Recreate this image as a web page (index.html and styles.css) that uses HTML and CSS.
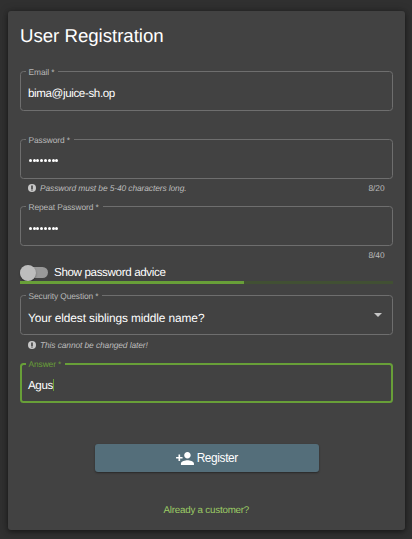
FILE: index.html
```html
<!DOCTYPE html>
<html lang="en">
<head>
<meta charset="utf-8">
<title>User Registration</title>
<link rel="stylesheet" href="styles.css">
</head>
<body>
<main class="card">
  <h1 class="title">User Registration</h1>
  <form class="form">
    <div class="field field-email">
      <label class="label">Email *</label>
      <span class="value">bima@juice-sh.op</span>
    </div>
    <div class="hint-row"></div>
    <div class="field">
      <label class="label">Password *</label>
      <span class="dots"><i></i><i></i><i></i><i></i><i></i><i></i><i></i><i></i></span>
    </div>
    <div class="hint-row">
      <svg class="info" viewBox="0 0 16 16"><circle cx="8" cy="8" r="8"/><path d="M6.4 3h3.2v7H6.4zM6.4 11h3.2v2H6.4z"/></svg>
      <em class="hint">Password must be 5-40 characters long.</em>
      <span class="count">8/20</span>
    </div>
    <div class="field">
      <label class="label">Repeat Password *</label>
      <span class="dots"><i></i><i></i><i></i><i></i><i></i><i></i><i></i><i></i></span>
    </div>
    <div class="hint-row hint-short"><span class="count">8/40</span></div>
    <div class="toggle-row">
      <span class="switch"><span class="thumb"></span></span>
      <span class="toggle-text">Show password advice</span>
    </div>
    <div class="progress"><div class="bar"></div></div>
    <div class="field">
      <label class="label">Security Question *</label>
      <span class="value value-select">Your eldest siblings middle name?</span>
      <svg class="arrow" viewBox="0 0 8 4"><path d="M0 0h8L4 4z"/></svg>
    </div>
    <div class="hint-row hint-row-later">
      <svg class="info" viewBox="0 0 16 16"><circle cx="8" cy="8" r="8"/><path d="M6.4 3h3.2v7H6.4zM6.4 11h3.2v2H6.4z"/></svg>
      <em class="hint">This cannot be changed later!</em>
    </div>
    <div class="field focused">
      <label class="label">Answer *</label>
      <span class="value">Agus</span><span class="caret"></span>
    </div>
    <button class="register" type="button">
      <svg class="person" viewBox="1 4 22 16"><path d="M15 12c2.21 0 4-1.79 4-4s-1.79-4-4-4-4 1.79-4 4 1.79 4 4 4zm-9-2V7H4v3H1v2h3v3h2v-3h3v-2H6zm9 4c-2.67 0-8 1.34-8 4v2h16v-2c0-2.66-5.33-4-8-4z"/></svg>
      <span>Register</span>
    </button>
    <a class="login">Already a customer?</a>
  </form>
</main>
</body>
</html>
```
FILE: styles.css
```css
* { box-sizing: border-box; }
body {
  margin: 0;
  height: 539px;
  overflow: hidden;
  padding: 11px 7px 9px 8px;
  background: #303030;
  font-family: "Liberation Sans", Arial, sans-serif;
  color: #fff;
  text-rendering: geometricPrecision;
}
.card {
  height: 519px;
  padding: 12px 12.5px 0 12px;
  border-radius: 3px;
  background: #424242;
  box-shadow: 0 2px 5px rgba(0, 0, 0, .4), 0 0 8px rgba(0, 0, 0, .25);
}
.title { margin: 0; height: 48px; font-size: 18.7px; font-weight: 400; line-height: 25px; letter-spacing: -.04px; white-space: nowrap; }
.form { display: flex; flex-direction: column; }
.field {
  position: relative;
  display: flex;
  align-items: center;
  height: 40px;
  padding: 4px 7px 0;
  border: 1px solid #6e6e6e;
  border-radius: 3.5px;
}
.label {
  position: absolute;
  top: -5px;
  left: 5px;
  padding: 0 4px 0 2.5px;
  background: #424242;
  color: #b8b8b8;
  font-size: 8.4px;
  line-height: 11px;
  letter-spacing: -.09px;
  white-space: nowrap;
}
.value { padding-top: 1px; font-size: 11.6px; line-height: 16px; letter-spacing: -.38px; white-space: nowrap; }
.value-select { padding-top: 2px; font-size: 11.9px; letter-spacing: -.11px; }
.dots { display: flex; gap: .8px; padding-left: .8px; }
.dots i { width: 3px; height: 3px; border-radius: 50%; background: #fff; }
.hint-row { display: flex; align-items: center; height: 27.7px; padding: 0 8px 10px; color: #bdbdbd; font-size: 8.4px; letter-spacing: -.09px; white-space: nowrap; }
.hint-row-later { padding-bottom: 8px; }
.hint-short { height: 18px; padding-bottom: 0; }
.info { width: 8px; height: 8px; margin-right: 4px; fill: #c8c8c8; }
.info path { fill: #424242; }
.count { margin-left: auto; }
.toggle-row { display: flex; align-items: center; height: 17px; }
.switch { width: 28px; height: 11px; border-radius: 6px; background: #999; display: flex; align-items: center; }
.thumb { flex: none; width: 16px; height: 16px; border-radius: 50%; background: #bdbdbd; box-shadow: 0 1px 2px rgba(0, 0, 0, .35); }
.toggle-text { margin-left: 6px; font-size: 11.6px; letter-spacing: -.35px; white-space: nowrap; }
.progress { height: 3px; margin-bottom: 11px; background: #415033; }
.bar { width: 60%; height: 3px; background: #689f38; }
.arrow { width: 8px; height: 4px; margin: -5px 3px 0 auto; fill: #c6c6c6; }
.focused { border: 2px solid #689f38; padding: 4px 6px 0; }
.focused .label { top: -6px; left: 4px; color: #689f38; }
.caret { width: 1px; height: 12px; background: #689f38; }
.register {
  display: flex;
  align-items: center;
  justify-content: center;
  align-self: center;
  gap: 3px;
  width: 223.5px;
  height: 28px;
  margin: 41px 0 0 1px;
  padding: 0;
  border: 0;
  border-radius: 3px;
  background: #546e7a;
  color: #fff;
  font: 11.9px "Liberation Sans", Arial, sans-serif;
  letter-spacing: -.38px;
  box-shadow: 0 1px 2px rgba(0, 0, 0, .4);
}
.person { width: 18px; height: 13px; fill: #fff; }
.login { align-self: center; margin-top: 32px; color: #9ccc65; font-size: 9.8px; line-height: 13px; letter-spacing: -.22px; }
```
